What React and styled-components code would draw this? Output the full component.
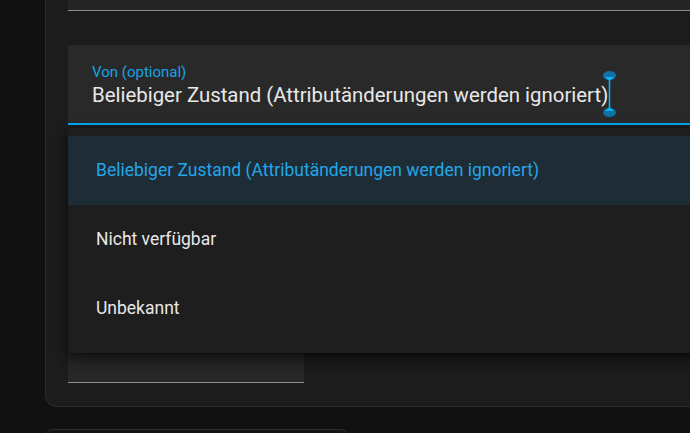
import React from "react";
import styled, { createGlobalStyle } from "styled-components";

const GlobalStyle = createGlobalStyle`
  html, body { margin: 0; padding: 0; background: #111111; overflow: hidden; }
  body { font-family: Roboto, "Noto Sans", Arial, sans-serif; -webkit-font-smoothing: antialiased; }
  #root { width: 690px; height: 433px; overflow: hidden; }
`;

const Page = styled.div`
  display: flex;
  flex-direction: column;
  padding-left: 45px;
  width: 690px;
  height: 433px;
  box-sizing: border-box;
  overflow: hidden;
`;

const Card = styled.div`
  position: relative;
  flex-shrink: 0;
  width: 900px;
  box-sizing: border-box;
  background: #1c1c1c;
  border: 1px solid #2c2c2c;
  border-top: none;
  border-radius: 0 0 12px 12px;
  padding: 0 0 23px 22px;
  display: flex;
  flex-direction: column;
  align-items: flex-start;
`;

const FilledField = styled.div`
  box-sizing: content-box;
  width: ${(p) => p.$width};
  height: ${(p) => p.$height}px;
  margin-top: ${(p) => p.$top}px;
  background: ${(p) => p.$bg || "#262626"};
  border-bottom: 1px solid #8d8d8d;
`;

const TextField = styled.div`
  position: relative;
  margin-top: 34px;
  width: 900px;
  background: #292929;
  border-radius: 4px 4px 0 0;
  border-bottom: 2px solid #03a9f4;
  padding: 18px 0 0 24px;
  box-sizing: border-box;
  height: 80px;
  display: flex;
  flex-direction: column;
`;

const Label = styled.div`
  font-size: 15px;
  line-height: 18px;
  color: #18a3e6;
`;

const Value = styled.div`
  margin-top: 1px;
  font-size: 20.4px;
  line-height: 26px;
  color: #e8e8e8;
  white-space: nowrap;
`;

const Caret = styled.span`
  position: relative;
  display: inline-block;
  width: 0;
  height: 0;
`;

const CaretSvg = styled.svg`
  position: absolute;
  left: -5.5px;
  top: -31px;
  overflow: visible;
`;

const Menu = styled.ul`
  position: absolute;
  top: 128px;
  left: 22px;
  width: 700px;
  margin: 0;
  padding: 8px 0 10px;
  list-style: none;
  background: #1e1e1e;
  border-radius: 4px;
  box-shadow: 0 5px 5px -3px rgba(0, 0, 0, 0.35), 0 8px 10px 1px rgba(0, 0, 0, 0.25),
    0 3px 14px 2px rgba(0, 0, 0, 0.2);
  z-index: 2;
`;

const MenuItem = styled.li`
  height: 69px;
  line-height: 69px;
  padding-left: 28px;
  font-size: 17.5px;
  white-space: nowrap;
  color: ${(p) => (p.$selected ? "#23a6ea" : "#e8e8e8")};
  background: ${(p) => (p.$selected ? "#1e2c35" : "transparent")};
`;

const SmallCard = styled.div`
  flex-shrink: 0;
  margin-top: 22px;
  width: 304px;
  height: 40px;
  box-sizing: border-box;
  border: 1px solid #2c2c2c;
  border-radius: 8px;
  background: #141414;
`;

export default function App() {
  return (
    <>
      <GlobalStyle />
      <Page>
        <Card>
          <FilledField $width="900px" $height={10} $top={0} $bg="#252525" />
          <TextField>
            <Label>Von (optional)</Label>
            <Value>
              Beliebiger Zustand (Attributänderungen werden ignoriert)
              <Caret>
                <CaretSvg width="13" height="46" viewBox="0 0 13 46">
                  <ellipse cx="6.5" cy="4.5" rx="6.5" ry="4.5" fill="#0d73a6" />
                  <path d="M2 6 L11 6 L6.5 10 Z" fill="#0bb0f5" />
                  <rect x="5.7" y="9" width="1.6" height="28" fill="#0bb0f5" />
                  <ellipse cx="6.5" cy="41.5" rx="6.5" ry="4.5" fill="#0d73a6" />
                  <path d="M2 40 L11 40 L6.5 36 Z" fill="#0bb0f5" />
                </CaretSvg>
              </Caret>
            </Value>
          </TextField>
          <FilledField $width="236px" $height={56} $top={201} $bg="#272727" />
          <Menu>
            <MenuItem $selected>Beliebiger Zustand (Attributänderungen werden ignoriert)</MenuItem>
            <MenuItem>Nicht verfügbar</MenuItem>
            <MenuItem>Unbekannt</MenuItem>
          </Menu>
        </Card>
        <SmallCard />
      </Page>
    </>
  );
}
